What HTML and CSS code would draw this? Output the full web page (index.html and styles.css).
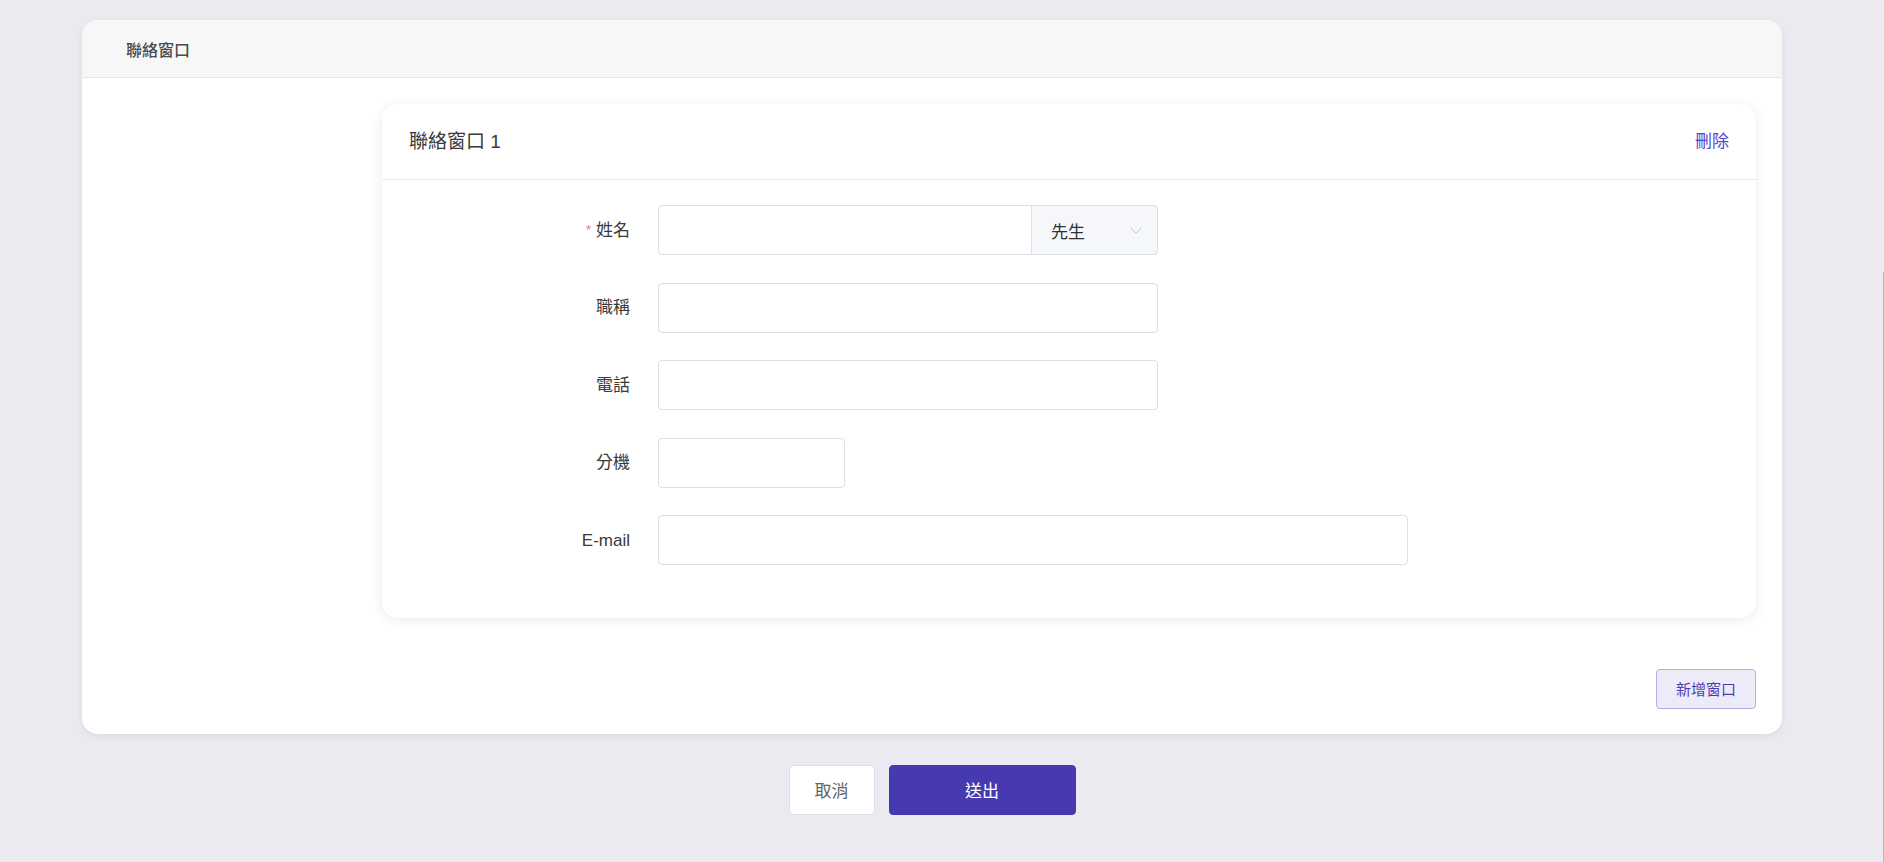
FILE: index.html
```html
<!DOCTYPE html>
<html lang="zh-Hant">
<head>
<meta charset="utf-8">
<title>聯絡窗口</title>
<link rel="stylesheet" href="styles.css">
</head>
<body>
<div class="page">
  <section class="panel">
    <header class="panel-head">聯絡窗口</header>
    <div class="panel-body">
      <div class="contact-card">
        <div class="contact-head">
          <span class="contact-title">聯絡窗口 1</span>
          <a class="link-delete">刪除</a>
        </div>
        <div class="contact-form">
          <div class="form-row">
            <label class="form-label"><span class="req">*</span>姓名</label>
            <div class="input-group w-500">
              <div class="input input-main"></div>
              <div class="input-append">
                <span>先生</span>
                <svg class="chev" width="12" height="7" viewBox="0 0 12 7"><polyline points="0.5,0.5 6,6 11.5,0.5" fill="none" stroke="#c0c4cc" stroke-width="1"/></svg>
              </div>
            </div>
          </div>
          <div class="form-row">
            <label class="form-label">職稱</label>
            <div class="input w-500"></div>
          </div>
          <div class="form-row">
            <label class="form-label">電話</label>
            <div class="input w-500"></div>
          </div>
          <div class="form-row">
            <label class="form-label">分機</label>
            <div class="input w-187"></div>
          </div>
          <div class="form-row">
            <label class="form-label latin">E-mail</label>
            <div class="input w-750"></div>
          </div>
        </div>
      </div>
      <div class="add-row">
        <button class="btn-add">新增窗口</button>
      </div>
    </div>
  </section>
  <div class="actions">
    <button class="btn btn-cancel">取消</button>
    <button class="btn btn-submit">送出</button>
  </div>
</div>
<div class="scroll-edge"></div>
</body>
</html>
```

FILE: styles.css
```css
* { box-sizing: border-box; }
html, body { margin: 0; padding: 0; }
body {
  background: #ebeaf0;
  font-family: "Liberation Sans", "Noto Sans CJK TC", sans-serif;
  color: #303133;
  width: 1884px;
  height: 862px;
  overflow: hidden;
}
.page {
  width: 1700px;
  margin-left: 82px;
  padding-top: 20px;
}
.panel {
  background: #fff;
  border-radius: 16px;
  box-shadow: 0 2px 6px rgba(0,0,0,0.07);
  overflow: hidden;
}
.panel-head {
  height: 58px;
  background: #f7f7f7;
  border-bottom: 1px solid #e7e7ec;
  padding-left: 44px;
  display: flex;
  align-items: center;
  font-size: 16px;
  font-weight: 500;
  color: #4a4a4a;
}
.panel-body {
  padding: 26px 26px 25px 300px;
}
.contact-card {
  background: #fff;
  border-radius: 16px;
  box-shadow: 0 2px 12px rgba(40,40,80,0.09);
}
.contact-head {
  height: 76px;
  border-bottom: 1px solid #e9e9f2;
  padding: 0 27px 0 27px;
  display: flex;
  align-items: center;
  justify-content: space-between;
}
.contact-title {
  font-size: 19px;
  color: #3a3a3a;
  line-height: 1;
}
.link-delete {
  font-size: 17px;
  color: #5546cc;
  line-height: 1;
  cursor: pointer;
}
.contact-form {
  padding: 25px 0 25px;
}
.form-row {
  display: flex;
  align-items: center;
  height: 50px;
  margin-bottom: 27.5px;
}
.form-label {
  width: 276px;
  padding-right: 28px;
  text-align: right;
  font-size: 17px;
  line-height: 1;
  color: #3a3a3a;
  display: flex;
  justify-content: flex-end;
  align-items: center;
}
.req {
  color: #f56c6c;
  font-size: 13px;
  margin-right: 5px;
  position: relative;
  top: -1px;
}
.input {
  height: 50px;
  border: 1px solid #dcdfe6;
  border-radius: 4px;
  background: #fff;
}
.w-500 { width: 500px; }
.w-187 { width: 187px; }
.w-750 { width: 750px; }
.input-group {
  display: flex;
  height: 50px;
}
.input-group .input-main {
  flex: 1;
  border-radius: 4px 0 0 4px;
}
.input-append {
  width: 126px;
  height: 50px;
  border: 1px solid #dcdfe6;
  border-left: none;
  border-radius: 0 4px 4px 0;
  background: #f5f7fa;
  display: flex;
  align-items: center;
  justify-content: space-between;
  padding: 0 15px 0 19px;
  font-size: 17px;
  color: #303133;
}
.chev { display: block; }
.add-row {
  display: flex;
  justify-content: flex-end;
  margin-top: 51px;
}
.btn-add {
  width: 100px;
  height: 40px;
  background: #eeebf8;
  border: 1px solid #b4ace6;
  border-radius: 4px;
  color: #4a3db4;
  font-family: inherit;
  font-size: 15px;
  padding: 0;
}
.actions {
  display: flex;
  justify-content: center;
  gap: 14px;
  margin-top: 31px;
}
.btn {
  height: 50px;
  border-radius: 4px;
  font-family: inherit;
  font-size: 17px;
  padding: 0;
}
.btn-cancel {
  width: 86px;
  background: #fff;
  border: 1px solid #dcdfe6;
  color: #606266;
}
.btn-submit {
  width: 187px;
  background: #473ab0;
  border: 1px solid #473ab0;
  color: #fff;
}
.scroll-edge {
  position: fixed;
  right: 0;
  top: 272px;
  bottom: 0;
  width: 1px;
  background: #b9b9bd;
}
```
